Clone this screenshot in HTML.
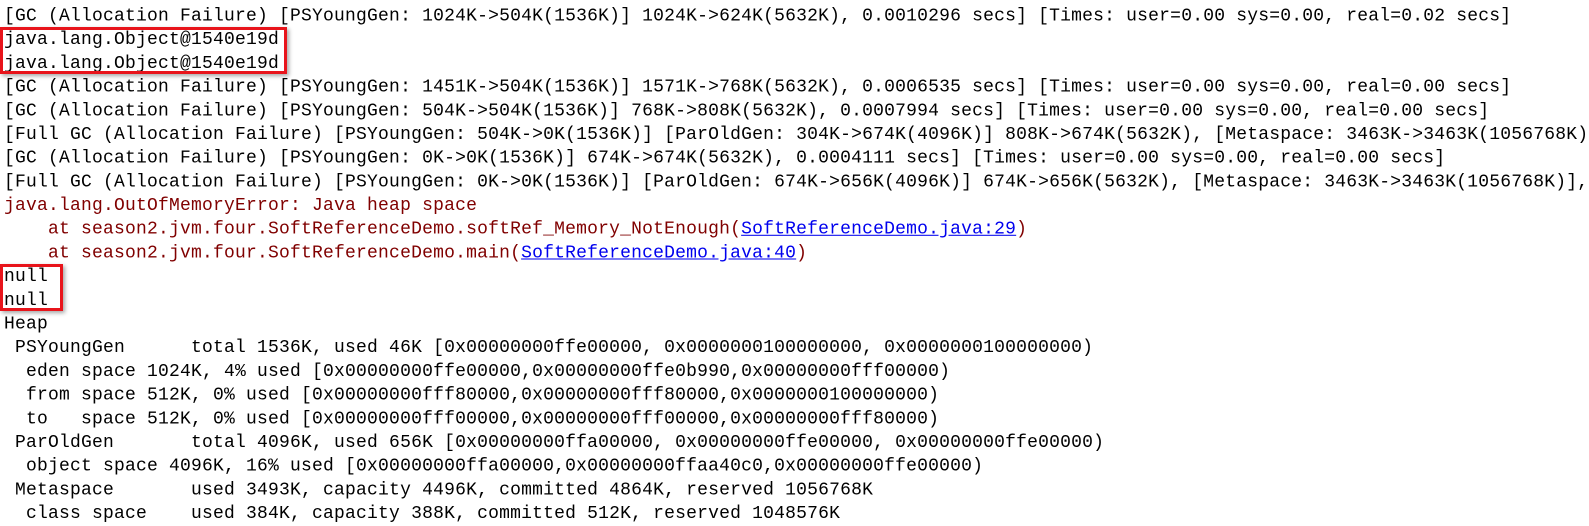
<!DOCTYPE html>
<html><head><meta charset="utf-8"><style>
html,body{margin:0;padding:0;background:#fff;width:1589px;height:523px;overflow:hidden}
.t{position:absolute;left:4px;top:5px;font-family:"Liberation Mono",monospace;font-size:18px;letter-spacing:0.2px;color:#000;transform:scaleY(1.0304);transform-origin:0 0}
.t div{height:23px;line-height:23px;white-space:pre}
.e{color:#800000}
a{color:#0000ee;text-decoration:underline}
.box{position:absolute;border:3px solid #e8141b;box-shadow:2px 2px 4px rgba(0,0,0,.35)}
</style></head><body>
<div class="t">
<div>[GC (Allocation Failure) [PSYoungGen: 1024K-&gt;504K(1536K)] 1024K-&gt;624K(5632K), 0.0010296 secs] [Times: user=0.00 sys=0.00, real=0.02 secs] </div>
<div>java.lang.Object@1540e19d</div>
<div>java.lang.Object@1540e19d</div>
<div>[GC (Allocation Failure) [PSYoungGen: 1451K-&gt;504K(1536K)] 1571K-&gt;768K(5632K), 0.0006535 secs] [Times: user=0.00 sys=0.00, real=0.00 secs] </div>
<div>[GC (Allocation Failure) [PSYoungGen: 504K-&gt;504K(1536K)] 768K-&gt;808K(5632K), 0.0007994 secs] [Times: user=0.00 sys=0.00, real=0.00 secs] </div>
<div>[Full GC (Allocation Failure) [PSYoungGen: 504K-&gt;0K(1536K)] [ParOldGen: 304K-&gt;674K(4096K)] 808K-&gt;674K(5632K), [Metaspace: 3463K-&gt;3463K(1056768K)</div>
<div>[GC (Allocation Failure) [PSYoungGen: 0K-&gt;0K(1536K)] 674K-&gt;674K(5632K), 0.0004111 secs] [Times: user=0.00 sys=0.00, real=0.00 secs] </div>
<div>[Full GC (Allocation Failure) [PSYoungGen: 0K-&gt;0K(1536K)] [ParOldGen: 674K-&gt;656K(4096K)] 674K-&gt;656K(5632K), [Metaspace: 3463K-&gt;3463K(1056768K)], </div>
<div class="e">java.lang.OutOfMemoryError: Java heap space</div>
<div class="e">    at season2.jvm.four.SoftReferenceDemo.softRef_Memory_NotEnough(<a>SoftReferenceDemo.java:29</a>)</div>
<div class="e">    at season2.jvm.four.SoftReferenceDemo.main(<a>SoftReferenceDemo.java:40</a>)</div>
<div>null</div>
<div>null</div>
<div>Heap</div>
<div> PSYoungGen      total 1536K, used 46K [0x00000000ffe00000, 0x0000000100000000, 0x0000000100000000)</div>
<div>  eden space 1024K, 4% used [0x00000000ffe00000,0x00000000ffe0b990,0x00000000fff00000)</div>
<div>  from space 512K, 0% used [0x00000000fff80000,0x00000000fff80000,0x0000000100000000)</div>
<div>  to   space 512K, 0% used [0x00000000fff00000,0x00000000fff00000,0x00000000fff80000)</div>
<div> ParOldGen       total 4096K, used 656K [0x00000000ffa00000, 0x00000000ffe00000, 0x00000000ffe00000)</div>
<div>  object space 4096K, 16% used [0x00000000ffa00000,0x00000000ffaa40c0,0x00000000ffe00000)</div>
<div> Metaspace       used 3493K, capacity 4496K, committed 4864K, reserved 1056768K</div>
<div>  class space    used 384K, capacity 388K, committed 512K, reserved 1048576K</div>
</div>
<div class="box" style="left:0;top:27px;width:281px;height:41px"></div>
<div class="box" style="left:0;top:264px;width:57px;height:41px"></div>
</body></html>
